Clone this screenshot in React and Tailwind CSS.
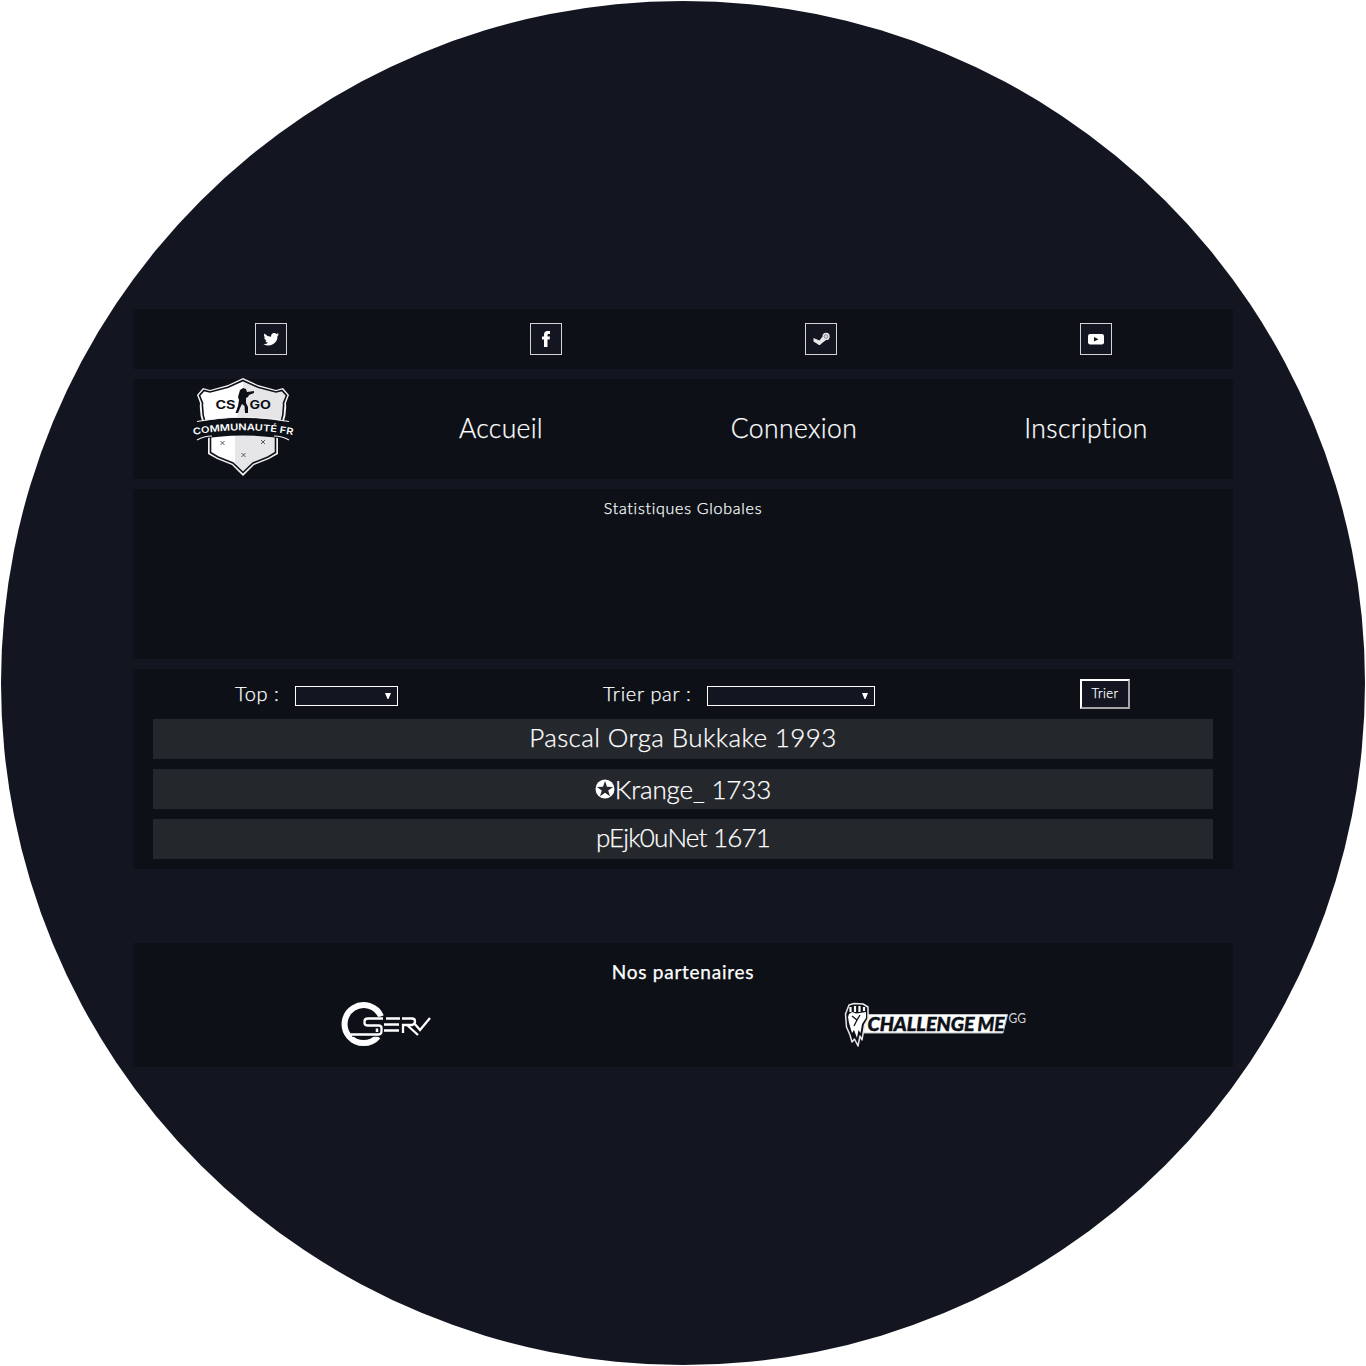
const panel = "w-full bg-[#0d1117]";

function Social({ children }) {
  return (
    <div className="flex flex-1 justify-center">
      <a className="block h-8 w-8 border border-[#d4d4d6] bg-[#131521]">
        <svg className="h-[30px] w-[30px]" viewBox="0 0 30 30" fill="#fff">{children}</svg>
      </a>
    </div>
  );
}

function Crest() {
  return (
    <svg className="h-[100px] w-[102px]" viewBox="0 0 102 100">
      <path d="M51 0 66 7 84 12 91 10 97 17 94 25Q95 36 91 46H86V76L77 81 62 87 51 98 40 87 25 81 16 76V46H11Q7 36 8 25L5 17 11 10 18 12 36 7Z" fill="#f3f3f4" />
      <path d="M51 3 66 9.500 84 14 90 12.500 94.500 17.500 91.500 25Q92 36 88.500 46H83.500V74.500L76 79 61 85 51 94.500 41 85 26 79 18.500 74.500V46H13.500Q10 36 10.500 25L7.500 17.500 12 12.500 18 14 36 9.500Z" fill="#fff" />
      <path d="M51 3 66 9.500 84 14 90 12.500 94.500 17.500 91.500 25Q92 36 88.500 46H83.500V74.500L76 79 61 85 51 94.500 43 87V46L51 20Z" fill="#e6e6e8" />
      <path d="M51 2.500 66 9.200 84 14 90 12.500 94.500 17.500 91.500 25Q92 36 88.500 46H83.500V74.500L76 79 61 85 51 94.500 41 85 26 79 18.500 74.500V46H13.500Q10 36 10.500 25L7.500 17.500 12 12.500 18 14 36 9.200Z" fill="none" stroke="#0d1117" strokeWidth="1.600" />
      <path d="M0 45Q51 34 102 45L99 62Q51 53 3 62Z" fill="#0d1117" />
      <path d="M5 43.500Q51 35 97 43.500M5 62Q12 58 20 58M82 58Q90 58 97 62" fill="none" stroke="#f3f3f4" strokeWidth="1.200" />
      <path d="M48 12 51 10 54 11 55 14 62 13 62 15 57 17 56 19 54 20 54 25 56 29 56 35 53 35 52.500 28 50 26 48.500 29 46 35 43.500 35 46 28 47 22 46 19Z" fill="#0d1117" />
      <g fill="#0d1117" fontFamily="Inter, sans-serif" fontWeight="700" fontSize="11.500">
        <text x="23.500" y="31" textLength="20" lengthAdjust="spacingAndGlyphs">CS</text>
        <text x="57.500" y="31" textLength="21.500" lengthAdjust="spacingAndGlyphs">GO</text>
      </g>
      <path id="crest-band" d="M1.500 57Q51 47.500 101.500 57" fill="none" />
      <text fill="#fff" fontFamily="Inter, sans-serif" fontWeight="600" fontSize="9.200">
        <textPath href="#crest-band" textLength="100" lengthAdjust="spacingAndGlyphs">COMMUNAUTÉ FR</textPath>
      </text>
      <path d="m28.500 63 4 4m0-4-4 4M69 62l4 4m0-4-4 4M49.500 75l4 4m0-4-4 4" stroke="#45484e" strokeWidth=".9" />
    </svg>
  );
}

function Serv() {
  return (
    <svg className="h-[46px] w-[94px]" viewBox="0 0 94 46" fill="none">
      <path d="M42 14.500A19 19 0 1 0 39 34.500" stroke="#fff" strokeWidth="6" />
      <path d="M13 32.500H40M25 17H44" stroke="#0d1117" strokeWidth="4.500" />
      <path d="M12 32.500H39Q42.500 32.500 42.500 29.500V26Q42.500 23.500 39.500 23.500H29Q25.500 23.500 25.500 21V19.500Q25.500 16.500 29 16.500H44M47 16.500H61M45 22.500H60M45 28.500H60M63 16.500H73Q76 16.500 76 19.500T73 23H64V31M68 23 79 33M75 21 81 28 91 16" stroke="#fff" strokeWidth="2.300" />
      <path d="M38 26.500v3.500" stroke="#fff" strokeWidth="2.500" />
    </svg>
  );
}

function Challenge() {
  return (
    <svg className="h-[46px] w-[184px]" viewBox="0 0 184 46">
      <path d="M23 12.500H163.500L159 31H17Z" fill="#fff" stroke="#bfc1c3" />
      <path d="M5 3 10 1.500 19 2 24 5V17L20.500 23 18 38 16 34 14 44 10.500 37 8 40 6 33 2.500 25 1.500 12Z" fill="#0d1117" stroke="#e8e8e8" strokeWidth="1.500" strokeLinejoin="round" />
      <path d="M5 12 8 10 12 11.500 16 11 22 10V16L18 22 16.500 31 14.500 28 13 36 10 28 8 31 5 21 4 15Z" fill="#fff" />
      <path d="M6.500 5V10M11 4V10M15.500 4V10M20 5V9" stroke="#fff" strokeWidth="2.200" />
      <path d="M8 14 13 18 16 13M13 18 10 24" stroke="#0d1117" strokeWidth="1.300" fill="none" />
      <g fontFamily="Lato, sans-serif">
        <g fontStyle="italic" fontWeight="900" fontSize="19.500" fill="#0d1117" stroke="#0d1117" strokeWidth=".5">
          <text x="23.500" y="28.500" textLength="107" lengthAdjust="spacingAndGlyphs">CHALLENGE</text>
          <text x="133.500" y="28.500" textLength="27" lengthAdjust="spacingAndGlyphs">ME</text>
        </g>
        <text x="164.500" y="20.500" fontWeight="400" fontSize="12.500" fill="#d4d5d6" textLength="17.500" lengthAdjust="spacingAndGlyphs">GG</text>
      </g>
    </svg>
  );
}

function Select({ className }) {
  return (
    <div className={`flex h-5 items-center justify-end border border-white bg-[#131521] pr-1.5 ${className}`}>
      <svg className="h-[6px] w-[6px]" viewBox="0 0 6 6"><path d="M0 0H6L3.500 6H2.500Z" fill="#fff" /></svg>
    </div>
  );
}

export default function App() {
  return (
    <div className="h-[1366px] w-[1366px] overflow-hidden bg-white p-px font-['Lato',sans-serif] font-light text-white [-webkit-text-stroke:0.25px_white]">
      <div className="flex h-[1364px] w-[1364px] flex-col items-center rounded-full bg-[#131521] pt-[308px]">
        <div className="flex w-[1100px] flex-col gap-2.5">
          <div className={`${panel} flex h-[60px] items-center`}>
            <Social><path d="M23 10.300a6 6 0 0 1-1.800.5 3 3 0 0 0 1.300-1.700 7 7 0 0 1-2 .8 3.200 3.200 0 0 0-5.400 2.900 9 9 0 0 1-6.600-3.300 3.200 3.200 0 0 0 1 4.200 3 3 0 0 1-1.400-.4 3.200 3.200 0 0 0 2.500 3.200 3 3 0 0 1-1.400.1 3.200 3.200 0 0 0 3 2.200A6.500 6.500 0 0 1 7.400 20 9.200 9.200 0 0 0 21.500 12a6 6 0 0 0 1.500-1.700Z" /></Social>
            <Social><path d="M13 23V15.500H11V12.500H13V10.500Q13 7 16.500 7H19V10H17.500Q16.500 10 16.500 11V12.500H19L18.600 15.500H16.500V23Z" /></Social>
            <Social><path d="m7.500 14 6 2.600 3-4.200a3.600 3.600 0 1 1 3.600 3.600L15.500 19.500a2.300 2.300 0 0 1-4 .4L7.500 17.500Z" fill="#e9e9eb" /><circle cx="20" cy="12.500" r="1.900" fill="#d6d6d8" stroke="#777985" strokeWidth=".8" /></Social>
            <Social><rect x="7" y="10" width="16" height="10.500" rx="2.200" /><path d="M13 13 17.500 15.200 13 17.500Z" fill="#131521" /></Social>
          </div>
          <div className={`${panel} flex h-[100px] pl-[59px] text-[26.5px] leading-[99px]`}>
            <div className="-mt-px w-[217px] [-webkit-text-stroke:0]"><Crest /></div>
            <div className="w-[184px] text-center tracking-[0.3px]">Accueil</div>
            <div className="ml-[109px] w-[184px] text-center tracking-[0.4px]">Connexion</div>
            <div className="ml-[108px] w-[184px] text-center tracking-[0.4px]">Inscription</div>
          </div>
          <div className={`${panel} h-[170px] pt-[9px] text-center text-base leading-5 tracking-[0.75px]`}>Statistiques Globales</div>
          <div className={`${panel} h-[200px] px-5 pt-2.5`}>
            <div className="flex h-[30px] pl-[82px] text-xl leading-[28px]">
              <div className="w-[60px] whitespace-nowrap tracking-[0.6px]">Top :</div>
              <Select className="mt-[7px] w-[103px]" />
              <div className="ml-[205px] w-[104px] whitespace-nowrap tracking-[0.7px]">Trier par :</div>
              <Select className="mt-[7px] w-[168px]" />
              <button className="ml-[205px] h-[30px] w-[50px] border-2 border-t-white border-l-white border-r-[#a6a6a6] border-b-[#a6a6a6] bg-[#131521] pb-0.5 text-[13px] leading-[24px] tracking-[0.4px]">Trier</button>
            </div>
            <div className="mt-2.5 flex flex-col gap-2.5 text-center text-[26px]">
              <div className="h-10 bg-[#24272b] leading-[36px] tracking-[0.4px]">Pascal Orga Bukkake 1993</div>
              <div className="flex h-10 items-center justify-center bg-[#24272b]">
                <svg className="h-5 w-5" viewBox="0 0 20 20"><circle cx="10" cy="10" r="9.500" fill="#fff" /><path d="m10 2 2 5.800 6 .1-4.800 3.600 1.800 5.700-5-3.500-5 3.500 1.800-5.700L2 7.900l6-.1Z" fill="#24272b" /></svg>
                <span className="tracking-[-0.15px]">Krange_ 1733</span>
              </div>
              <div className="h-10 bg-[#24272b] leading-[36px] tracking-[-0.8px]">pEjk0uNet 1671</div>
            </div>
          </div>
          <div className={`${panel} mt-16 h-[124px] pt-[18px]`}>
            <h3 className="text-center text-[19px] font-normal leading-[22px] tracking-[0.75px]">Nos partenaires</h3>
            <div className="mt-[19px] flex pl-[206px] [-webkit-text-stroke:0]">
              <Serv />
              <div className="ml-[411px]"><Challenge /></div>
            </div>
          </div>
        </div>
      </div>
    </div>
  );
}
